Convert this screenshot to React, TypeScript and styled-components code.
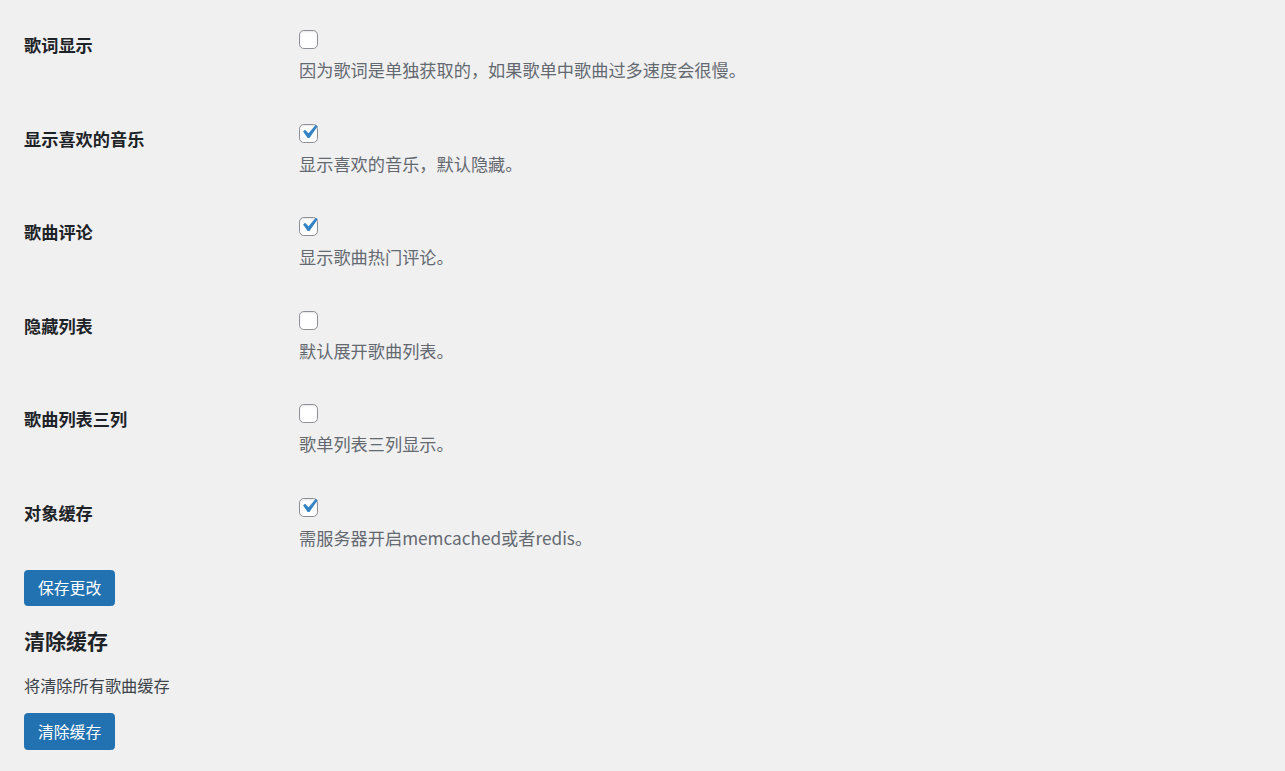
import React, { memo } from 'react'
import styled, { createGlobalStyle } from 'styled-components'

const GlobalStyle = createGlobalStyle`
    html, body {
        margin:0;
        padding:0;
        background-color:#f0f0f1;
    }
    body {
        font-family:"Segoe UI","Noto Sans CJK SC","Noto Sans",sans-serif;
        color:#1d2327;
    }
`

const options = [
    { label: '歌词显示', desc: '因为歌词是单独获取的，如果歌单中歌曲过多速度会很慢。', checked: false },
    { label: '显示喜欢的音乐', desc: '显示喜欢的音乐，默认隐藏。', checked: true },
    { label: '歌曲评论', desc: '显示歌曲热门评论。', checked: true },
    { label: '隐藏列表', desc: '默认展开歌曲列表。', checked: false },
    { label: '歌曲列表三列', desc: '歌单列表三列显示。', checked: false },
    { label: '对象缓存', desc: '需服务器开启memcached或者redis。', checked: true },
]

const CheckBox = ({ checked }: { checked: boolean }) => (
    <Box>
        {checked && (
            <svg width="28" height="28" viewBox="0 0 20 20">
                <path d="M14.83 4.89l1.34.94-5.81 8.38H9.02L5.78 9.67l1.34-1.25 2.57 2.4z" fill="#3582c4" />
            </svg>
        )}
    </Box>
)

const App = () => {
    return (
        <Container>
            <GlobalStyle />
            <div className="wrap">
                <FormTable>
                    {options.map((o) => (
                        <Row key={o.label}>
                            <Label>{o.label}</Label>
                            <Field>
                                <CheckBox checked={o.checked} />
                                <Desc>{o.desc}</Desc>
                            </Field>
                        </Row>
                    ))}
                </FormTable>
                <Button $top={21}>保存更改</Button>
                <Title>清除缓存</Title>
                <Note>将清除所有歌曲缓存</Note>
                <Button $top={17}>清除缓存</Button>
            </div>
        </Container>
    )
}

export default memo(App)

const Container = styled.div`
    min-height:771px;
    box-sizing:border-box;
    padding:10px 24px 0;
    .wrap{
        display:flex;
        flex-direction:column;
        align-items:flex-start;
    }
`

const FormTable = styled.div`
    display:flex;
    flex-direction:column;
    gap:22.6px;
    width:100%;
`

const Row = styled.div`
    display:grid;
    grid-template-columns:275px 1fr;
    padding-top:20px;
`

const Label = styled.div`
    padding-top:4px;
    font-size:17.2px;
    line-height:22px;
    font-weight:700;
    color:#1d2327;
`

const Field = styled.div`
    display:flex;
    flex-direction:column;
    align-items:flex-start;
`

const Box = styled.div`
    position:relative;
    width:19px;
    height:19px;
    box-sizing:border-box;
    border:1px solid #8c8f94;
    border-radius:4.8px;
    background:#fff;
    box-shadow:inset 0 1px 2px rgba(0,0,0,.1);
    svg{
        position:absolute;
        left:-5px;
        top:-7px;
    }
`

const Desc = styled.p`
    margin:10px 0 0;
    font-size:17.2px;
    line-height:22px;
    color:#646970;
`

const Button = styled.button<{ $top: number }>`
    margin-top:${(p) => p.$top}px;
    height:36.5px;
    padding:0 13px;
    border:1px solid #2271b1;
    border-radius:3.6px;
    background:#2271b1;
    color:#fff;
    font-family:inherit;
    font-size:15.8px;
    line-height:34px;
    cursor:pointer;
`

const Title = styled.h2`
    margin:20px 0 0;
    font-size:21px;
    line-height:28px;
    font-weight:700;
    color:#1d2327;
`

const Note = styled.p`
    margin:20px 0 0;
    font-size:16.2px;
    line-height:22px;
    color:#3c434a;
`
